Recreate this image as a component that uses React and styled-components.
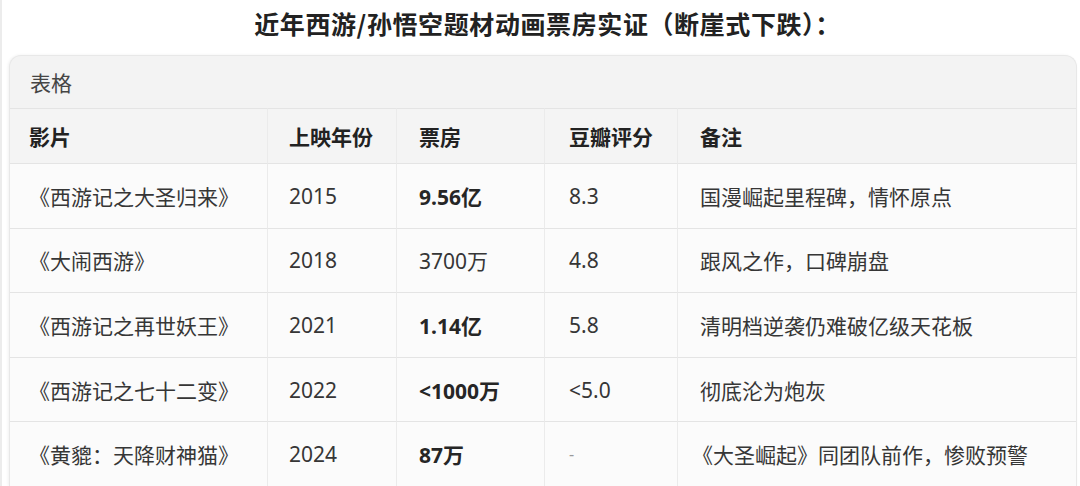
import React from 'react';
import styled, { createGlobalStyle } from 'styled-components';

const GlobalStyle = createGlobalStyle`
  html, body {
    margin: 0;
    padding: 0;
    background: #ffffff;
    overflow: hidden;
  }
  body {
    font-family: "Noto Sans", "Noto Sans CJK SC", sans-serif;
    color: #2b2b2b;
  }
`;

const Page = styled.div`
  width: 1080px;
  height: 486px;
  box-sizing: border-box;
  border-left: 2px solid #ececec;
  padding-left: 7px;
  overflow: hidden;
`;

const Title = styled.h1`
  margin: 0;
  height: 55px;
  display: flex;
  align-items: center;
  justify-content: center;
  padding-left: 6px;
  padding-bottom: 9px;
  box-sizing: border-box;
  font-family: "Noto Sans CJK SC", sans-serif;
  font-size: 25px;
  font-weight: 700;
  color: #222;
  letter-spacing: 0.6px;
`;

const Card = styled.div`
  width: 1066px;
  border: 1px solid #e8e8e8;
  border-bottom: none;
  border-radius: 12px 12px 0 0;
  background: #f3f3f3;
  overflow: hidden;
  box-shadow: -1px 0 3px rgba(0, 0, 0, 0.06);
`;

const CardLabel = styled.div`
  height: 52px;
  display: flex;
  align-items: center;
  padding-left: 20px;
  font-family: "Noto Sans CJK SC", sans-serif;
  font-size: 21px;
  color: #454545;
`;

const Grid = styled.div`
  display: grid;
  grid-template-columns: 257px 129px 148px 133px 1fr;
`;

const Cell = styled.div`
  height: ${p => (p.$head ? 55 : 64.6)}px;
  display: flex;
  align-items: center;
  padding-left: ${p => p.$pad || 22}px;
  box-sizing: border-box;
  font-size: 21px;
  font-weight: ${p => (p.$bold || p.$head ? 700 : 400)};
  color: ${p => (p.$head ? '#222' : p.$bold ? '#262626' : '#363636')};
  background: ${p => (p.$head ? '#f4f4f4' : '#fbfbfb')};
  border-top: 1px solid #e4e4e4;
  border-left: ${p => (p.$first ? 'none' : '1px solid #ebebeb')};
  white-space: nowrap;
`;

const Dash = styled.span`
  color: #9a9a9a;
  font-size: 16px;
`;

const pads = [19, 21, 22, 24, 22];

const head = ['影片', '上映年份', '票房', '豆瓣评分', '备注'];

const rows = [
  ['《西游记之大圣归来》', '2015', '9.56亿', '8.3', '国漫崛起里程碑，情怀原点', true],
  ['《大闹西游》', '2018', '3700万', '4.8', '跟风之作，口碑崩盘', false],
  ['《西游记之再世妖王》', '2021', '1.14亿', '5.8', '清明档逆袭仍难破亿级天花板', true],
  ['《西游记之七十二变》', '2022', '<1000万', '<5.0', '彻底沦为炮灰', true],
  ['《黄貔：天降财神猫》', '2024', '87万', '-', '《大圣崛起》同团队前作，惨败预警', true],
];

export default function App() {
  return (
    <>
      <GlobalStyle />
      <Page>
        <Title>近年西游/孙悟空题材动画票房实证（断崖式下跌）：</Title>
        <Card>
          <CardLabel>表格</CardLabel>
          <Grid>
            {head.map((h, i) => (
              <Cell key={h} $head $first={i === 0} $pad={pads[i]}>{h}</Cell>
            ))}
            {rows.map(r =>
              r.slice(0, 5).map((v, i) => (
                <Cell
                  key={r[0] + i}
                  $first={i === 0}
                  $pad={i === 4 && v.startsWith('《') ? 14 : pads[i]}
                  $bold={i === 2 && r[5]}
                >
                  {v === '-' ? <Dash>-</Dash> : v}
                </Cell>
              ))
            )}
          </Grid>
        </Card>
      </Page>
    </>
  );
}
